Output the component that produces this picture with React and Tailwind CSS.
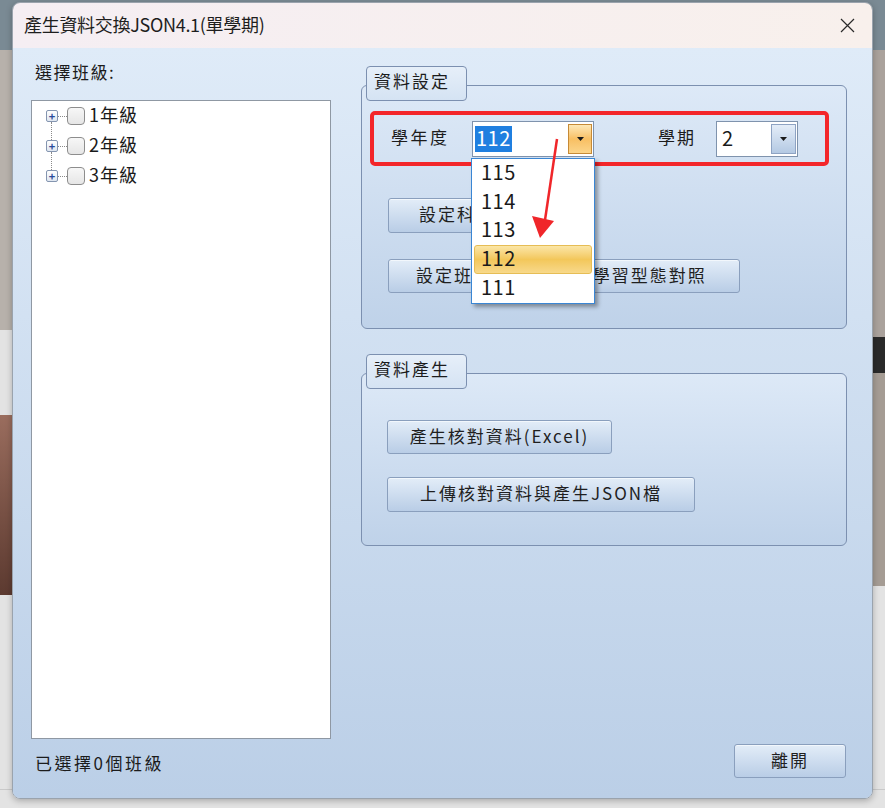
import React from "react";

const FONT = { fontFamily: '"Noto Sans CJK TC", "Noto Sans", sans-serif' };

function Btn({ className = "", children }) {
  return (
    <div
      className={`flex items-center rounded-[3px] border border-[#8a9fbd] bg-gradient-to-b from-[#e3edf8] to-[#b9cde6] pb-[3px] text-[17px] tracking-[2px] text-[#1f1f1f] shadow-[inset_0_1px_0_#f2f7fc] ${className}`}
    >
      {children}
    </div>
  );
}

function GroupBox({ title, className = "", frameClass = "", children }) {
  return (
    <div className={`relative pt-[19px] ${className}`}>
      <div
        className={`rounded-[6px] border border-[#7c90b0] bg-gradient-to-b from-[#dde9f7] to-[#bfd2e9] ${frameClass}`}
      >
        {children}
      </div>
      <div className="absolute left-[5px] top-0 flex h-[35px] w-[101px] items-center rounded-[4px] border border-[#7c90b0] bg-gradient-to-b from-[#e6eff9] to-[#d5e3f3] pb-[5px] pl-[7px] text-[17px] tracking-[2px] text-[#1c1c1c]">
        {title}
      </div>
    </div>
  );
}

function TreeRow({ label, last }) {
  return (
    <div className="relative flex h-[30px] items-center">
      {!last && (
        <div className="absolute left-[19px] top-[21px] h-[20px] border-l border-dotted border-[#8a8a8a]" />
      )}
      <div className="ml-[14px] flex h-[12px] w-[12px] items-center justify-center rounded-[2px] border border-[#8495b0] bg-gradient-to-b from-white to-[#dfe6f0] text-[11px] font-bold leading-none text-[#2a4a9a]">
        +
      </div>
      <div className="w-[9px] border-t border-dotted border-[#8a8a8a]" />
      <div className="h-[18px] w-[18px] rounded-[4px] border border-[#8d8d8d] bg-gradient-to-b from-[#f7f7f7] to-[#e6e6e6]" />
      <span className="mb-[3px] ml-[4px] text-[18px] tracking-[1px] text-[#1a1a1a]">{label}</span>
    </div>
  );
}

function Caret() {
  return (
    <svg width="7" height="4" viewBox="0 0 7 4">
      <path d="M0 0 L7 0 L3.5 4 Z" fill="#1a1a1a" />
    </svg>
  );
}

export default function App() {
  return (
    <div className="relative h-[808px] w-[885px] overflow-hidden bg-[#e3e3e3]" style={FONT}>
      {/* desktop behind the window */}
      <div className="absolute left-0 top-0 h-[50px] w-[885px] bg-[#7a8a94]" />
      <div className="absolute left-0 top-[50px] h-[280px] w-[12px] bg-[#b7b1ab]" />
      <div className="absolute left-0 top-[415px] h-[180px] w-[12px] bg-gradient-to-b from-[#9a6d5e] to-[#5c3a30]" />
      <div className="absolute right-0 top-[50px] h-[287px] w-[12px] bg-[#aaa29c]" />
      <div className="absolute right-0 top-[337px] h-[36px] w-[12px] bg-[#2a2a2a]" />
      <div className="absolute right-0 top-[373px] h-[213px] w-[12px] bg-[#a59c94]" />
      <div className="absolute left-0 top-[789px] w-[885px] border-t border-[#c9c9c9]" />

      {/* dialog window */}
      <div className="absolute left-[12px] top-[2px] flex h-[797px] w-[861px] flex-col overflow-hidden rounded-[8px] border border-[#9aa3ad] shadow-[0_2px_6px_rgba(0,0,0,0.25)]">
        <div className="flex h-[45px] shrink-0 items-center justify-between bg-gradient-to-r from-[#f5eef3] to-[#f8f0ec] pl-[11px] pr-[17px]">
          <span className="pb-[2px] text-[18px] tracking-[-0.3px] text-[#1e1e1e]">產生資料交換JSON4.1(單學期)</span>
          <svg width="15" height="15" viewBox="0 0 15 15">
            <path d="M1 1 L14 14 M14 1 L1 14" stroke="#2a2a2a" strokeWidth="1.2" />
          </svg>
        </div>

        <div className="flex flex-1 bg-gradient-to-b from-[#dfebf8] to-[#bbcfe7] pl-[18px]">
          {/* left column */}
          <div className="flex w-[300px] flex-col">
            <div className="flex h-[52px] items-center pb-[5px] pl-[4px] text-[17px] tracking-[1.5px] text-[#1c1c1c]">
              選擇班級:
            </div>
            <div className="h-[639px] border border-[#8f98a3] bg-white">
              <TreeRow label="1年級" />
              <TreeRow label="2年級" />
              <TreeRow label="3年級" last />
            </div>
            <div className="flex h-[54px] items-center pb-[6px] pl-[4px] text-[17px] tracking-[2.5px] text-[#1c1c1c]">
              已選擇0個班級
            </div>
          </div>

          {/* right column */}
          <div className="ml-[30px] flex w-[486px] flex-col">
            <GroupBox title="資料設定" className="mt-[18px]" frameClass="h-[244px] pl-[8px] pt-[25px]">
              <div className="flex h-[55px] w-[459px] items-center rounded-[5px] border-[4px] border-[#f3262a] pl-[17px]">
                <span className="mb-[3px] w-[81px] text-[17px] tracking-[2.5px] text-[#1c1c1c]">學年度</span>
                <div className="relative flex h-[36px] w-[122px] items-center border border-[#7f93ad] bg-white pl-[2px]">
                  <span className="flex h-[26px] items-center bg-[#1f7fe0] px-[1px] pb-[2px] text-[20px] tracking-[0.5px] text-white">112</span>
                  <div className="ml-auto mr-[1px] flex h-[30px] w-[24px] items-center justify-center border border-[#c68a36] bg-gradient-to-b from-[#fde8b6] via-[#f8bf62] to-[#fbd58a]">
                    <Caret />
                  </div>
                  {/* open dropdown list */}
                  <div className="absolute left-[-2px] top-[36px] z-10 w-[124px] border border-[#3a86d4] bg-white py-[1px] shadow-[3px_3px_4px_rgba(0,0,0,0.35)]">
                    {["115", "114", "113", "112", "111"].map((y) => (
                      <div
                        key={y}
                        className={`mx-[2px] flex h-[28.6px] items-center pb-[3px] pl-[6px] text-[20px] tracking-[0.5px] text-[#1a1a1a] ${
                          y === "112"
                            ? "rounded-[3px] border border-[#e6bd55] bg-gradient-to-b from-[#fbe6a6] via-[#f3c75a] to-[#f8d98a]"
                            : "border border-transparent"
                        }`}
                      >
                        {y}
                      </div>
                    ))}
                  </div>
                </div>
                <span className="mb-[3px] ml-[64px] w-[58px] text-[17px] tracking-[2px] text-[#1c1c1c]">學期</span>
                <div className="flex h-[36px] w-[82px] items-center border border-[#7f93ad] bg-white pl-[5px]">
                  <span className="pb-[2px] text-[20px] text-[#1a1a1a]">2</span>
                  <div className="ml-auto mr-[1px] flex h-[30px] w-[25px] items-center justify-center border border-[#8ea3c3] bg-gradient-to-b from-[#e4edf8] to-[#b4c9e3]">
                    <Caret />
                  </div>
                </div>
              </div>
              <Btn className="ml-[18px] mt-[32px] h-[35px] w-[182px] pl-[30px]">設定科目對照</Btn>
              <Btn className="ml-[18px] mt-[26px] h-[34px] w-[352px] pl-[27px]">設定班級與課程對應 學習型態對照</Btn>
            </GroupBox>

            <GroupBox title="資料產生" className="mt-[25px]" frameClass="h-[173px] pl-[25px] pt-[46px]">
              <Btn className="h-[34px] w-[225px] justify-center">產生核對資料(Excel)</Btn>
              <Btn className="mt-[23px] h-[35px] w-[308px] justify-center">上傳核對資料與產生JSON檔</Btn>
            </GroupBox>

            <div className="mt-auto mb-[20px] flex justify-end pr-[1px]">
              <Btn className="h-[34px] w-[112px] justify-center">離開</Btn>
            </div>
          </div>
        </div>
      </div>

      {/* red annotation arrow */}
      <svg className="absolute left-0 top-0 z-20" width="885" height="808" viewBox="0 0 885 808">
        <path d="M557 139 L545 220" stroke="#f0262a" strokeWidth="2.5" fill="none" />
        <path d="M532 216 L554 221 L540 238 Z" fill="#f0262a" />
      </svg>
    </div>
  );
}
